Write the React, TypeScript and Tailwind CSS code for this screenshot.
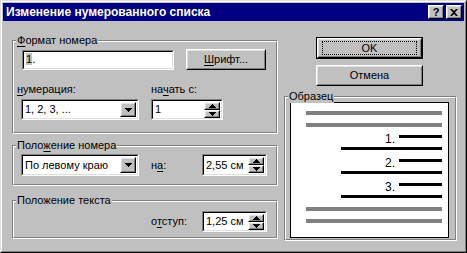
import React from "react";

const FONT = { fontFamily: '"Liberation Sans", Arial, sans-serif' };

function Raised({ className = "", children }: { className?: string; children?: React.ReactNode }) {
  return (
    <div className={"border border-t-white border-l-white border-b-black border-r-black " + className}>
      <div className="flex h-full w-full items-center justify-center border border-t-[#dfdfdf] border-l-[#dfdfdf] border-b-[#808080] border-r-[#808080] bg-[#c0c0c0]">
        {children}
      </div>
    </div>
  );
}

function Sunken({ className = "", children }: { className?: string; children?: React.ReactNode }) {
  return (
    <div className={"border border-t-[#808080] border-l-[#808080] border-b-white border-r-white " + className}>
      <div className="flex h-full w-full items-center border border-t-black border-l-black border-b-[#dfdfdf] border-r-[#dfdfdf] bg-white">
        {children}
      </div>
    </div>
  );
}

function Group({ label, className = "", children }: { label: React.ReactNode; className?: string; children?: React.ReactNode }) {
  return (
    <div className={"relative border border-t-[#808080] border-l-[#808080] border-b-white border-r-white " + className}>
      <div className="h-full border border-t-white border-l-white border-b-[#808080] border-r-[#808080]">{children}</div>
      <span className="absolute -top-[7px] left-[3px] bg-[#c0c0c0] px-px text-[11px] leading-[13px] text-black">{label}</span>
    </div>
  );
}

function DownArrow() {
  return (
    <svg width="7" height="4" viewBox="0 0 7 4" className="block">
      <path d="M0 0h7v1H0zM1 1h5v1H1zM2 2h3v1H2zM3 3h1v1H3z" fill="#000" />
    </svg>
  );
}

function UpArrow() {
  return (
    <svg width="7" height="4" viewBox="0 0 7 4" className="block">
      <path d="M3 0h1v1H3zM2 1h3v1H2zM1 2h5v1H1zM0 3h7v1H0z" fill="#000" />
    </svg>
  );
}

function Combo({ value, className = "" }: { value: string; className?: string }) {
  return (
    <Sunken className={className}>
      <span className="flex-1 pl-[2px] text-[11px] leading-none">{value}</span>
      <Raised className="mr-px h-[calc(100%-2px)] w-[16px]">
        <DownArrow />
      </Raised>
    </Sunken>
  );
}

function Spin({ value, className = "" }: { value: string; className?: string }) {
  return (
    <Sunken className={className}>
      <span className="flex-1 pl-[2px] text-[11px] leading-none">{value}</span>
      <div className="mr-px flex h-full w-[16px] flex-col py-px">
        <Raised className="flex-1">
          <UpArrow />
        </Raised>
        <Raised className="flex-1">
          <DownArrow />
        </Raised>
      </div>
    </Sunken>
  );
}

function U({ children }: { children: React.ReactNode }) {
  return <span className="underline underline-offset-[2px]">{children}</span>;
}

function GrayRow() {
  return (
    <div className="h-[12px]">
      <div className="h-[4px] w-full bg-[#808080]" />
    </div>
  );
}

function NumberRows({ n }: { n: string }) {
  return (
    <>
      <div className="flex h-[12px] items-start justify-end">
        <span className="-mt-[1px] mr-[4px] text-[12px] leading-[11px]">{n}</span>
        <div className="h-[3px] w-[43px] bg-black" />
      </div>
      <div className="flex h-[12px] justify-end">
        <div className="h-[3px] w-[101px] bg-black" />
      </div>
    </>
  );
}

export default function App() {
  return (
    <div style={FONT} className="h-[253px] w-[467px] border border-t-[#dfdfdf] border-l-[#dfdfdf] border-b-black border-r-black text-black">
      <div className="flex h-full flex-col border border-t-white border-l-white border-b-[#808080] border-r-[#808080] bg-[#c0c0c0] p-px">
        {/* Title bar */}
        <div className="flex h-[18px] items-center bg-[#000080] pl-[3px] pr-[2px]">
          <span className="flex-1 text-[12px] font-bold text-white">Изменение нумерованного списка</span>
          <Raised className="h-[14px] w-[16px]">
            <span className="text-[11px] font-bold leading-none">?</span>
          </Raised>
          <Raised className="ml-[2px] h-[14px] w-[16px]">
            <svg width="8" height="7" viewBox="0 0 8 7" className="block">
              <path d="M0 0h2l2 2 2-2h2L5 3.5 8 7H6L4 5 2 7H0l3-3.5z" fill="#000" />
            </svg>
          </Raised>
        </div>

        {/* Body */}
        <div className="flex flex-1">
          {/* Left column */}
          <div className="ml-[9px] flex w-[266px] flex-col">
            <Group
              label={
                <>
                  <U>Ф</U>ормат номера
                </>
              }
              className="mt-[19px] h-[94px]"
            >
              <div className="flex flex-col px-[7px] pt-[7px]">
                <div className="flex items-center">
                  <Sunken className="ml-px h-[20px] w-[152px]">
                    <span className="pl-[2px] text-[11px] leading-none">
                      <span className="bg-[#c0c0c0]">1</span>.
                    </span>
                  </Sunken>
                  <Raised className="ml-[12px] h-[21px] w-[80px]">
                    <span className="text-[11px] leading-none">
                      <U>Ш</U>рифт...
                    </span>
                  </Raised>
                </div>
                <div className="mt-[13px] flex">
                  <div className="flex w-[118px] flex-col">
                    <span className="-ml-[4px] text-[11px] leading-[13px]">
                      <U>н</U>умерация:
                    </span>
                    <Combo value="1, 2, 3, ..." className="mt-[3px] h-[21px]" />
                  </div>
                  <div className="ml-[12px] flex w-[72px] flex-col">
                    <span className="text-[11px] leading-[13px]">
                      на<U>ч</U>ать с:
                    </span>
                    <Spin value="1" className="mt-[3px] h-[21px]" />
                  </div>
                </div>
              </div>
            </Group>

            <Group
              label={
                <>
                  Поло<U>ж</U>ение номера
                </>
              }
              className="mt-[11px] h-[41px]"
            >
              <div className="flex items-center px-[7px] pt-[7px]">
                <Combo value="По левому краю" className="h-[22px] w-[118px]" />
                <span className="ml-[12px] w-[51px] text-[11px]">
                  н<U>а</U>:
                </span>
                <Spin value="2,55 см" className="h-[22px] w-[65px]" />
              </div>
            </Group>

            <Group label="Положение текста" className="mt-[14px] h-[39px]">
              <div className="flex items-center pl-[137px] pt-[9px]">
                <span className="w-[51px] text-[11px]">
                  о<U>т</U>ступ:
                </span>
                <Spin value="1,25 см" className="h-[21px] w-[65px]" />
              </div>
            </Group>
          </div>

          {/* Right column */}
          <div className="ml-[6px] flex w-[173px] flex-col">
            <div className="ml-[32px] mt-[16px] h-[22px] w-[107px] border border-black">
              <Raised className="h-full w-full">
                <span className="flex h-[14px] w-[95px] items-center justify-center border border-dotted border-black text-[11px] leading-none">
                  OK
                </span>
              </Raised>
            </div>
            <Raised className="ml-[32px] mt-[6px] h-[21px] w-[107px]">
              <span className="text-[11px] leading-none">Отмена</span>
            </Raised>
            <Group label="Образец" className="mt-[10px] h-[145px]">
              <div className="h-full pb-[1px] pl-[4px] pr-[6px] pt-[4px]">
                <div className="flex h-full flex-col border border-black bg-white pl-[15px] pr-[6px] pt-[8px]">
                  <GrayRow />
                  <GrayRow />
                  <NumberRows n="1." />
                  <NumberRows n="2." />
                  <NumberRows n="3." />
                  <GrayRow />
                  <GrayRow />
                </div>
              </div>
            </Group>
          </div>
        </div>
      </div>
    </div>
  );
}
